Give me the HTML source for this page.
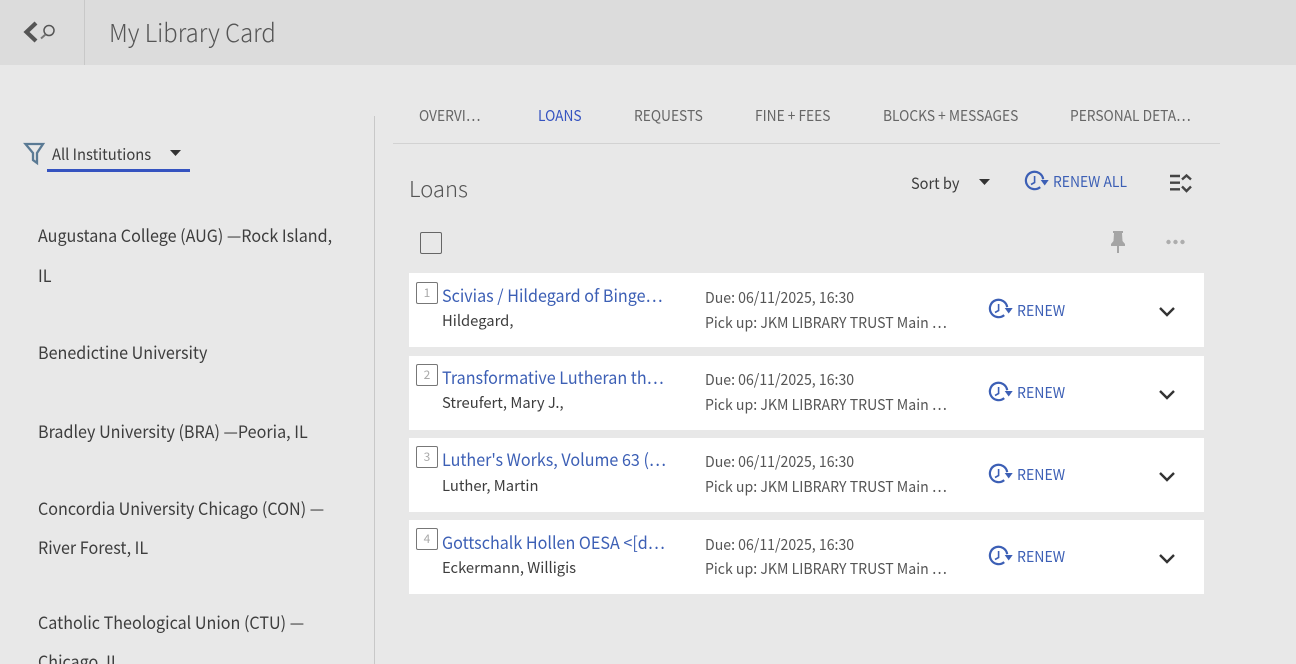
<!DOCTYPE html>
<html><head><meta charset="utf-8">
<style>
html,body{margin:0;padding:0;width:1296px;height:664px;overflow:hidden;background:#e8e8e8}
body{font-family:"Noto Sans CJK JP","Liberation Sans",sans-serif;color:#3d3d3d;position:relative}
.t{position:absolute;white-space:nowrap;line-height:24px;height:24px;transform-origin:left center}
.a{position:absolute}
.hd{left:0;top:0;width:1296px;height:65px;background:#dcdcdc}
.tab{font-size:15px;color:#666;top:104px;transform:scaleX(.917)}
.inst{font-size:17px;color:#3d3d3d;left:38px;transform:scaleX(.948)}
.row{left:409px;width:795px;height:74px;background:#fff}
.num{left:416px;width:20px;height:20px;border:1px solid #777;border-radius:2px;background:#fff;font-size:12px;color:#aaa;text-align:center;line-height:19px}
.title{font-size:17px;color:#3c5fb5;left:442px;transform:scaleX(.948)}
.au{font-size:15px;color:#3d3d3d;left:442px;transform:scaleX(.985)}
.d{font-size:15px;color:#555;left:705px;transform:scaleX(.94)}
.rn{font-size:15px;color:#3c5fb5;left:1017px;transform:scaleX(.94)}
svg{position:absolute;overflow:visible}
</style></head><body>
<div class="a hd"></div>
<div class="a" style="left:84px;top:0;width:1px;height:65px;background:#c8c8c8"></div>
<svg style="left:0;top:0" width="90" height="65" fill="none"><path d="M36 23 L26.500 32 L36 41" stroke="#555" stroke-width="4.200"/><circle cx="49" cy="30.500" r="5" stroke="#555" stroke-width="1.500"/><path d="M45.500 34.500 L41 38.500" stroke="#777" stroke-width="2"/></svg>
<div class="t" style="left:109px;top:18px;font-size:25px;line-height:29px;height:29px;color:#555;font-weight:300;transform:scaleX(.954)">My Library Card</div>

<svg style="left:0;top:0" width="60" height="170" fill="none"><path d="M25.500 144 H43 L37 153 V163 L33 160 V153 Z" stroke="#5a7a94" stroke-width="2.300"/></svg>
<div class="t" style="left:51.500px;top:142px;font-size:15.500px;color:#3d3d3d;transform:scaleX(.952)">All Institutions</div>
<svg style="left:0;top:0" width="200" height="160"><path d="M170 150 H181 L175.500 156 Z" fill="#333"/></svg>
<div class="a" style="left:47px;top:169px;width:143px;height:3px;background:#3553c0"></div>

<div class="t inst" style="top:223px">Augustana College (AUG) —Rock Island,</div>
<div class="t inst" style="top:263px">IL</div>
<div class="t inst" style="top:340px">Benedictine University</div>
<div class="t inst" style="top:419px">Bradley University (BRA) —Peoria, IL</div>
<div class="t inst" style="top:496px">Concordia University Chicago (CON) —</div>
<div class="t inst" style="top:535px">River Forest, IL</div>
<div class="t inst" style="top:610px">Catholic Theological Union (CTU) —</div>
<div class="t inst" style="top:649px">Chicago, IL</div>

<div class="a" style="left:374px;top:116px;width:1px;height:548px;background:#c8c8c8"></div>

<div class="t tab" style="left:419px">OVERVI…</div>
<div class="t tab" style="left:538px;color:#3553c0">LOANS</div>
<div class="t tab" style="left:634px">REQUESTS</div>
<div class="t tab" style="left:755px">FINE + FEES</div>
<div class="t tab" style="left:883px">BLOCKS + MESSAGES</div>
<div class="t tab" style="left:1069.500px">PERSONAL DETA…</div>
<div class="a" style="left:393px;top:143px;width:827px;height:1px;background:#d2d2d2"></div>

<div class="t" style="left:409px;top:174px;font-size:22px;line-height:28px;height:28px;color:#555;font-weight:300">Loans</div>
<div class="t" style="left:910.500px;top:171px;font-size:15.500px;transform:scaleX(.94)">Sort by</div>
<svg style="left:0;top:0" width="1000" height="190"><path d="M979 179 H990 L984.500 185 Z" fill="#333"/></svg>

<svg style="left:1025px;top:171px" width="24" height="20" viewBox="0 0 24 20" fill="none"><path d="M18.200 8.200 A8.700 8.700 0 1 0 15.200 16.100" stroke="#3c5fb5" stroke-width="2.200"/><path d="M15.700 9 H23.700 L19.700 14.500 Z" fill="#3c5fb5"/><path d="M9.600 5 V11.500 L6 13.500" stroke="#3c5fb5" stroke-width="1.600"/></svg>
<div class="t" style="left:1053px;top:170px;font-size:15px;color:#3c5fb5;transform:scaleX(.925)">RENEW ALL</div>

<svg style="left:1170px;top:174px" width="22" height="20" fill="none" stroke="#444" stroke-width="2.400"><path d="M0 2 H10 M0 8.700 H10 M0 15.300 H10"/><path d="M12 5.500 L16.500 1.500 L21 5.500 M12 12.500 L16.500 17 L21 12.500"/></svg>

<div class="a" style="left:420px;top:232px;width:20px;height:20px;border:1px solid #666;border-radius:2px"></div>
<svg style="left:1110px;top:231px" width="16" height="22"><path d="M3 0 H13 V2 H12 L12.500 10 L15 13 V15 H1 V13 L3.500 10 L4 2 H3 Z M7 15 H9 V22 H7 Z" fill="#a5a5a5"/></svg>
<svg style="left:1165.500px;top:239px" width="20" height="6" fill="#adadad"><circle cx="2.500" cy="3" r="2.200"/><circle cx="9.500" cy="3" r="2.200"/><circle cx="16.500" cy="3" r="2.200"/></svg>

<!-- Row 1 -->
<div class="a row" style="top:273px"></div>
<div class="a num" style="top:282px">1</div>
<div class="t title" style="top:283px">Scivias / Hildegard of Binge…</div>
<div class="t au" style="top:309px">Hildegard,</div>
<div class="t d" style="top:286px">Due: 06/11/2025, 16:30</div>
<div class="t d" style="top:311px">Pick up: JKM LIBRARY TRUST Main …</div>
<svg style="left:989px;top:299px" width="24" height="20" viewBox="0 0 24 20" fill="none"><path d="M18.200 8.200 A8.700 8.700 0 1 0 15.200 16.100" stroke="#3c5fb5" stroke-width="2.200"/><path d="M15.700 9 H23.700 L19.700 14.500 Z" fill="#3c5fb5"/><path d="M9.600 5 V11.500 L6 13.500" stroke="#3c5fb5" stroke-width="1.600"/></svg>
<div class="t rn" style="top:299px">RENEW</div>
<svg style="left:1159px;top:306px" width="16" height="11" fill="none"><path d="M1 2 L8 9 L15 2" stroke="#333" stroke-width="2.400"/></svg>

<!-- Row 2 -->
<div class="a row" style="top:356px"></div>
<div class="a num" style="top:364px">2</div>
<div class="t title" style="top:365px">Transformative Lutheran th…</div>
<div class="t au" style="top:391px">Streufert, Mary J.,</div>
<div class="t d" style="top:368px">Due: 06/11/2025, 16:30</div>
<div class="t d" style="top:393px">Pick up: JKM LIBRARY TRUST Main …</div>
<svg style="left:989px;top:382px" width="24" height="20" viewBox="0 0 24 20" fill="none"><path d="M18.200 8.200 A8.700 8.700 0 1 0 15.200 16.100" stroke="#3c5fb5" stroke-width="2.200"/><path d="M15.700 9 H23.700 L19.700 14.500 Z" fill="#3c5fb5"/><path d="M9.600 5 V11.500 L6 13.500" stroke="#3c5fb5" stroke-width="1.600"/></svg>
<div class="t rn" style="top:381px">RENEW</div>
<svg style="left:1159px;top:389px" width="16" height="11" fill="none"><path d="M1 2 L8 9 L15 2" stroke="#333" stroke-width="2.400"/></svg>

<!-- Row 3 -->
<div class="a row" style="top:438px"></div>
<div class="a num" style="top:446px">3</div>
<div class="t title" style="top:447px">Luther's Works, Volume 63 (…</div>
<div class="t au" style="top:474px">Luther, Martin</div>
<div class="t d" style="top:450px">Due: 06/11/2025, 16:30</div>
<div class="t d" style="top:475px">Pick up: JKM LIBRARY TRUST Main …</div>
<svg style="left:989px;top:464px" width="24" height="20" viewBox="0 0 24 20" fill="none"><path d="M18.200 8.200 A8.700 8.700 0 1 0 15.200 16.100" stroke="#3c5fb5" stroke-width="2.200"/><path d="M15.700 9 H23.700 L19.700 14.500 Z" fill="#3c5fb5"/><path d="M9.600 5 V11.500 L6 13.500" stroke="#3c5fb5" stroke-width="1.600"/></svg>
<div class="t rn" style="top:463px">RENEW</div>
<svg style="left:1159px;top:471px" width="16" height="11" fill="none"><path d="M1 2 L8 9 L15 2" stroke="#333" stroke-width="2.400"/></svg>

<!-- Row 4 -->
<div class="a row" style="top:520px"></div>
<div class="a num" style="top:528px">4</div>
<div class="t title" style="top:530px">Gottschalk Hollen OESA &lt;[d…</div>
<div class="t au" style="top:556px">Eckermann, Willigis</div>
<div class="t d" style="top:533px">Due: 06/11/2025, 16:30</div>
<div class="t d" style="top:557px">Pick up: JKM LIBRARY TRUST Main …</div>
<svg style="left:989px;top:546px" width="24" height="20" viewBox="0 0 24 20" fill="none"><path d="M18.200 8.200 A8.700 8.700 0 1 0 15.200 16.100" stroke="#3c5fb5" stroke-width="2.200"/><path d="M15.700 9 H23.700 L19.700 14.500 Z" fill="#3c5fb5"/><path d="M9.600 5 V11.500 L6 13.500" stroke="#3c5fb5" stroke-width="1.600"/></svg>
<div class="t rn" style="top:545px">RENEW</div>
<svg style="left:1159px;top:553px" width="16" height="11" fill="none"><path d="M1 2 L8 9 L15 2" stroke="#333" stroke-width="2.400"/></svg>
</body></html>
